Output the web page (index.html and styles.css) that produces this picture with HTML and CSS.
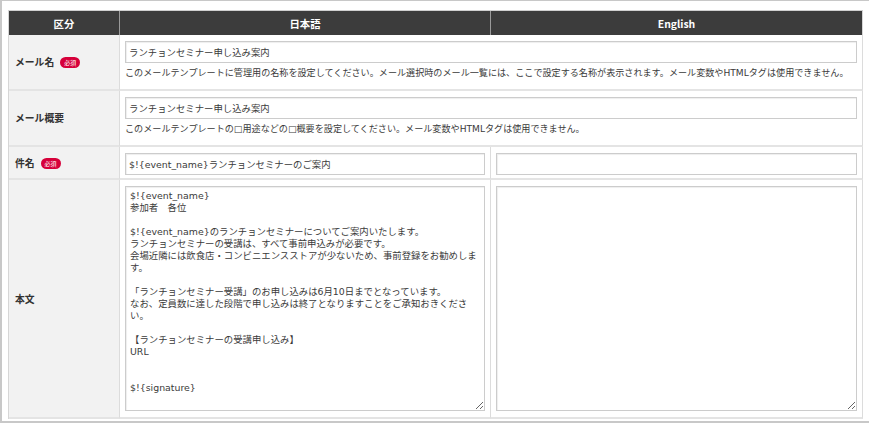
FILE: index.html
```html
<!DOCTYPE html>
<html lang="ja">
<head>
<meta charset="utf-8">
<link rel="stylesheet" href="styles.css">
</head>
<body>
<div class="frame">
<table class="grid">
  <colgroup><col class="c1"><col class="c2"><col class="c3"></colgroup>
  <thead>
    <tr><th>区分</th><th>日本語</th><th>English</th></tr>
  </thead>
  <tbody>
    <tr class="r-name">
      <td class="label">メール名<span class="req">必須</span></td>
      <td colspan="2" class="field">
        <input class="text" type="text" value="ランチョンセミナー申し込み案内">
        <p class="desc">このメールテンプレートに管理用の名称を設定してください。メール選択時のメール一覧には、ここで設定する名称が表示されます。メール変数やHTMLタグは使用できません。</p>
      </td>
    </tr>
    <tr class="r-name">
      <td class="label">メール概要</td>
      <td colspan="2" class="field">
        <input class="text" type="text" value="ランチョンセミナー申し込み案内">
        <p class="desc">このメールテンプレートの&#9633;用途などの&#9633;概要を設定してください。メール変数やHTMLタグは使用できません。</p>
      </td>
    </tr>
    <tr class="r-subj">
      <td class="label">件名<span class="req">必須</span></td>
      <td class="field"><input class="text" type="text" value="$!{event_name}ランチョンセミナーのご案内"></td>
      <td class="field"><input class="text" type="text" value=""></td>
    </tr>
    <tr class="r-body">
      <td class="label">本文</td>
      <td class="field"><textarea class="area">$!{event_name}
参加者　各位

$!{event_name}のランチョンセミナーについてご案内いたします。
ランチョンセミナーの受講は、すべて事前申込みが必要です。
会場近隣には飲食店・コンビニエンスストアが少ないため、事前登録をお勧めします。

「ランチョンセミナー受講」のお申し込みは6月10日までとなっています。
なお、定員数に達した段階で申し込みは終了となりますことをご承知おきください。

【ランチョンセミナーの受講申し込み】
URL


$!{signature}</textarea></td>
      <td class="field"><textarea class="area"></textarea></td>
    </tr>
  </tbody>
</table>
</div>
</body>
</html>
```

FILE: styles.css
```css
html, body {
  margin: 0;
  padding: 0;
  background: #ffffff;
  overflow: hidden;
}
body {
  font-family: "Noto Sans CJK JP", "Noto Sans", sans-serif;
  color: #333333;
}
.frame {
  border-top: 1px solid #c8c8c8;
  border-left: 2px solid #c8c8c8;
  border-bottom: 2px solid #c8c8c8;
  padding: 9px 0 1px 6px;
  height: 410px;
}
.grid {
  width: 855px;
  border-collapse: separate;
  border-spacing: 0;
  table-layout: fixed;
  border-left: 1px solid #d6d6d6;
  border-top: 1px solid #d0d0d0;
}
.c1 { width: 111px; }
.c2 { width: 371px; }
.c3 { width: 372px; }
.grid th {
  background: #3c3c3c;
  color: #ffffff;
  font-size: 10.4px;
  font-weight: bold;
  height: 24px;
  padding: 0;
  text-align: center;
  border-right: 1px solid #9a9a9a;
}
.grid th:last-child { border-right: 1px solid #d6d6d6; }
.grid td {
  border-right: 1px solid #dcdcdc;
  border-bottom: 2px solid #e4e4e4;
  padding: 0;
}
.label {
  background: #f2f2f2;
  font-size: 9.8px;
  font-weight: bold;
  color: #333333;
  padding-left: 6px !important;
  vertical-align: middle;
  white-space: nowrap;
}
.req {
  display: inline-block;
  vertical-align: 1px;
  margin-left: 6px;
  background: #d6003a;
  color: #ffffff;
  font-size: 6px;
  font-weight: normal;
  line-height: 11px;
  height: 11px;
  padding: 0 4px;
  border-radius: 6px;
}
.field {
  vertical-align: top;
  padding: 6px 5px 0 5px !important;
}
.r-name .field { padding-bottom: 10px !important; }
.r-subj .field { padding-bottom: 3px !important; }
.r-body .field { padding-bottom: 6px !important; }
.text {
  display: block;
  width: 100%;
  box-sizing: border-box;
  height: 22px;
  margin: 0;
  padding: 0 3px;
  border: 1px solid #cccccc;
  box-shadow: inset 1px 1px 1px rgba(0, 0, 0, 0.07);
  font-family: "DejaVu Sans", "Noto Sans CJK JP", sans-serif;
  font-size: 9.4px;
  color: #3a3a3a;
  background: #ffffff;
  outline: none;
}
.desc {
  margin: 4px 0 0 0;
  font-family: "DejaVu Sans", "Noto Sans CJK JP", sans-serif;
  font-size: 9.1px;
  line-height: 12px;
  color: #3a3a3a;
  white-space: nowrap;
}
.area {
  display: block;
  width: 100%;
  box-sizing: border-box;
  height: 225px;
  margin: 0;
  padding: 3px 4px;
  border: 1px solid #cccccc;
  box-shadow: inset 1px 1px 1px rgba(0, 0, 0, 0.07);
  font-family: "DejaVu Sans", "Noto Sans CJK JP", sans-serif;
  font-size: 9.4px;
  line-height: 12px;
  color: #3a3a3a;
  background: #ffffff;
  overflow: hidden;
  outline: none;
}
```
